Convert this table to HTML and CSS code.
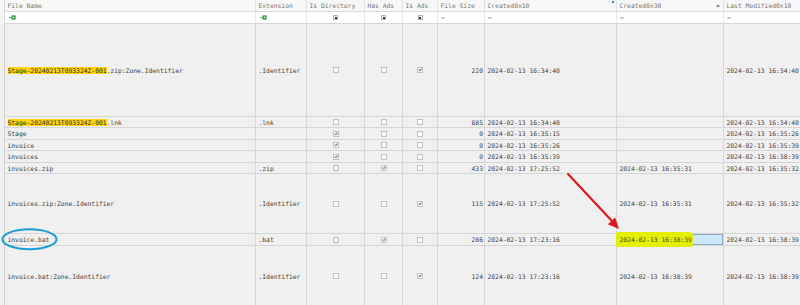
FILE: index.html
```html
<!DOCTYPE html>
<html>
<head>
<meta charset="utf-8">
<link rel="stylesheet" href="styles.css">
</head>
<body>
<div class="page">
  <div class="grid">
    <div class="row hdr">
      <div class="c g"></div>
      <div class="c">File Name</div>
      <div class="c">Extension</div>
      <div class="c">Is Directory</div>
      <div class="c">Has Ads</div>
      <div class="c">Is Ads</div>
      <div class="c">File Size</div>
      <div class="c mark">Created0x10<span class="sortdot"></span></div>
      <div class="c mark">Created0x30<span class="sortup"></span></div>
      <div class="c">Last Modified0x10</div>
    </div>
    <div class="row flt">
      <div class="c g"></div>
      <div class="c"><svg class="ficon" width="7" height="5" viewBox="0 0 7 5"><path d="M0 2.5H2.6" stroke="#8a8a8a" stroke-width="1"/><rect x="2.5" y="0.3" width="4.2" height="4.4" rx="1.2" fill="#2f9a46"/><rect x="3.8" y="1.7" width="1.6" height="1.6" fill="#c6ecce"/></svg></div>
      <div class="c"><svg class="ficon" width="7" height="5" viewBox="0 0 7 5"><path d="M0 2.5H2.6" stroke="#8a8a8a" stroke-width="1"/><rect x="2.5" y="0.3" width="4.2" height="4.4" rx="1.2" fill="#2f9a46"/><rect x="3.8" y="1.7" width="1.6" height="1.6" fill="#c6ecce"/></svg></div>
      <div class="c k"><span class="tri"></span></div>
      <div class="c k"><span class="tri"></span></div>
      <div class="c k"><span class="tri"></span></div>
      <div class="c eq">=</div>
      <div class="c eq">=</div>
      <div class="c eq">=</div>
      <div class="c eq">=</div>
    </div>

    <div class="row">
      <div class="c g"></div>
      <div class="c"><span class="hl">Stage-20240213T093324Z-001</span>.zip:Zone.Identifier</div>
      <div class="c">.Identifier</div>
      <div class="c k"><span class="cb"></span></div>
      <div class="c k"><span class="cb"></span></div>
      <div class="c k"><span class="cb on"></span></div>
      <div class="c s">220</div>
      <div class="c">2024-02-13 16:34:40</div>
      <div class="c"></div>
      <div class="c">2024-02-13 16:34:40</div>
    </div>
    <div class="row">
      <div class="c g"></div>
      <div class="c"><span class="hl">Stage-20240213T093324Z-001</span>.lnk</div>
      <div class="c">.lnk</div>
      <div class="c k"><span class="cb"></span></div>
      <div class="c k"><span class="cb"></span></div>
      <div class="c k"><span class="cb"></span></div>
      <div class="c s">685</div>
      <div class="c">2024-02-13 16:34:40</div>
      <div class="c"></div>
      <div class="c">2024-02-13 16:34:40</div>
    </div>
    <div class="row">
      <div class="c g"></div>
      <div class="c">Stage</div>
      <div class="c"></div>
      <div class="c k"><span class="cb on"></span></div>
      <div class="c k"><span class="cb"></span></div>
      <div class="c k"><span class="cb"></span></div>
      <div class="c s">0</div>
      <div class="c">2024-02-13 16:35:15</div>
      <div class="c"></div>
      <div class="c">2024-02-13 16:35:26</div>
    </div>
    <div class="row">
      <div class="c g"></div>
      <div class="c">invoice</div>
      <div class="c"></div>
      <div class="c k"><span class="cb on"></span></div>
      <div class="c k"><span class="cb"></span></div>
      <div class="c k"><span class="cb"></span></div>
      <div class="c s">0</div>
      <div class="c">2024-02-13 16:35:26</div>
      <div class="c"></div>
      <div class="c">2024-02-13 16:35:39</div>
    </div>
    <div class="row">
      <div class="c g"></div>
      <div class="c">invoices</div>
      <div class="c"></div>
      <div class="c k"><span class="cb on"></span></div>
      <div class="c k"><span class="cb"></span></div>
      <div class="c k"><span class="cb"></span></div>
      <div class="c s">0</div>
      <div class="c">2024-02-13 16:35:39</div>
      <div class="c"></div>
      <div class="c">2024-02-13 16:38:39</div>
    </div>
    <div class="row">
      <div class="c g"></div>
      <div class="c">invoices.zip</div>
      <div class="c">.zip</div>
      <div class="c k"><span class="cb"></span></div>
      <div class="c k"><span class="cb on"></span></div>
      <div class="c k"><span class="cb"></span></div>
      <div class="c s">433</div>
      <div class="c">2024-02-13 17:25:52</div>
      <div class="c">2024-02-13 16:35:31</div>
      <div class="c">2024-02-13 16:35:32</div>
    </div>
    <div class="row">
      <div class="c g"></div>
      <div class="c">invoices.zip:Zone.Identifier</div>
      <div class="c">.Identifier</div>
      <div class="c k"><span class="cb"></span></div>
      <div class="c k"><span class="cb"></span></div>
      <div class="c k"><span class="cb on"></span></div>
      <div class="c s">115</div>
      <div class="c">2024-02-13 17:25:52</div>
      <div class="c">2024-02-13 16:35:31</div>
      <div class="c">2024-02-13 16:35:32</div>
    </div>
    <div class="row">
      <div class="c g"></div>
      <div class="c">invoice.bat</div>
      <div class="c">.bat</div>
      <div class="c k"><span class="cb"></span></div>
      <div class="c k"><span class="cb on"></span></div>
      <div class="c k"><span class="cb"></span></div>
      <div class="c s">286</div>
      <div class="c">2024-02-13 17:23:16</div>
      <div class="c sel"><span class="marker"></span><span class="seltext">2024-02-13 16:38:39</span></div>
      <div class="c">2024-02-13 16:38:39</div>
    </div>
    <div class="row">
      <div class="c g"></div>
      <div class="c">invoice.bat:Zone.Identifier</div>
      <div class="c">.Identifier</div>
      <div class="c k"><span class="cb"></span></div>
      <div class="c k"><span class="cb"></span></div>
      <div class="c k"><span class="cb on"></span></div>
      <div class="c s">124</div>
      <div class="c">2024-02-13 17:23:16</div>
      <div class="c">2024-02-13 16:38:39</div>
      <div class="c">2024-02-13 16:38:39</div>
    </div>
  </div>

  <svg class="annot" width="800" height="305" viewBox="0 0 800 305">
    <ellipse cx="29.5" cy="239.2" rx="27" ry="10" fill="none" stroke="#1d9dd2" stroke-width="2"/>
    <path d="M568 174 L612 221" stroke="#e0191f" stroke-width="2.2" stroke-linecap="round"/>
    <path d="M619 229 L607.8 224.3 L615.2 217.5 Z" fill="#e0191f"/>
  </svg>
</div>
</body>
</html>
```

FILE: styles.css
```css
html, body {
  margin: 0;
  padding: 0;
  overflow: hidden;
  background: #f0f0f0;
}

.page {
  position: relative;
  width: 800px;
  height: 305px;
  overflow: hidden;
  font-family: "DejaVu Sans Mono", "Liberation Mono", monospace;
  font-size: 6.33px;
  color: #3e3e3e;
}

.grid {
  display: grid;
  grid-template-columns: 5px 251px 51px 58px 38px 35px 47px 132px 107px 120px;
  grid-template-rows: 12px 12px 93px 11px 12px 11px 12px 11px 60px 12px 61px;
}

.row {
  display: contents;
}

.c {
  box-sizing: border-box;
  display: flex;
  align-items: center;
  padding: 0 2px 0 2.5px;
  white-space: nowrap;
  overflow: hidden;
  background: #f0f0f0;
  border-right: 1px solid #d6d6d6;
  border-bottom: 1px solid #d6d6d6;
}

.c.g {
  padding: 0;
  border-bottom: none;
  border-right: 1px solid #d2d2d2;
}

.hdr .c {
  background: #f7f7f7;
  color: #777777;
  border-right-color: #e3e3e3;
  border-bottom-color: #dcdcdc;
}

.hdr .c.g {
  border-right-color: #d8d8d8;
}

.mark {
  position: relative;
}

.sortdot {
  position: absolute;
  right: 2px;
  top: 1px;
  width: 2px;
  height: 2px;
  background: #2f7fd8;
}

.sortup {
  position: absolute;
  right: 3px;
  top: 4px;
  width: 0;
  height: 0;
  border-left: 2px solid transparent;
  border-right: 2px solid transparent;
  border-bottom: 3px solid #8a8a8a;
}

.flt .c {
  background: #ffffff;
  border-right-color: #e4e4e4;
  border-bottom-color: #d6d6d6;
}

.flt .c.g {
  background: #f4f4f4;
  border-right-color: #d8d8d8;
}

.ficon {
  display: block;
  margin-left: 1px;
}

.eq {
  color: #9a9a9a;
  padding-left: 3px;
}

.k {
  justify-content: center;
  padding: 0;
}

.tri {
  box-sizing: border-box;
  width: 5px;
  height: 5px;
  border: 1px solid #b0b0b0;
  background: #fff;
  position: relative;
}

.tri::after {
  content: "";
  position: absolute;
  left: 0.5px;
  top: 0.5px;
  width: 2px;
  height: 2px;
  background: #3a3a3a;
}

.cb {
  box-sizing: border-box;
  width: 6px;
  height: 6px;
  border: 1px solid #c2c2c2;
  background: #fbfbfb;
  position: relative;
}

.cb.on::after {
  content: "";
  position: absolute;
  left: 1.2px;
  top: 0.2px;
  width: 1.2px;
  height: 2.4px;
  border-right: 0.8px solid #7a7a7a;
  border-bottom: 0.8px solid #7a7a7a;
  transform: rotate(40deg);
}

.s {
  justify-content: flex-end;
  padding-right: 1px;
}

.hl {
  background: #fdd20e;
  color: #2e2e2e;
}

.sel {
  position: relative;
  overflow: visible;
  background: #cde7fb;
  box-shadow: inset 0 0 0 1px #8eaac4;
  z-index: 1;
}

.marker {
  position: absolute;
  left: -1px;
  top: -2px;
  width: 77px;
  height: 15px;
  background: #e4ee08;
  border-radius: 2px 4px 3px 2px;
}

.seltext {
  position: relative;
  color: #4a4a1a;
}

.annot {
  position: absolute;
  left: 0;
  top: 0;
  pointer-events: none;
  z-index: 5;
}
```
